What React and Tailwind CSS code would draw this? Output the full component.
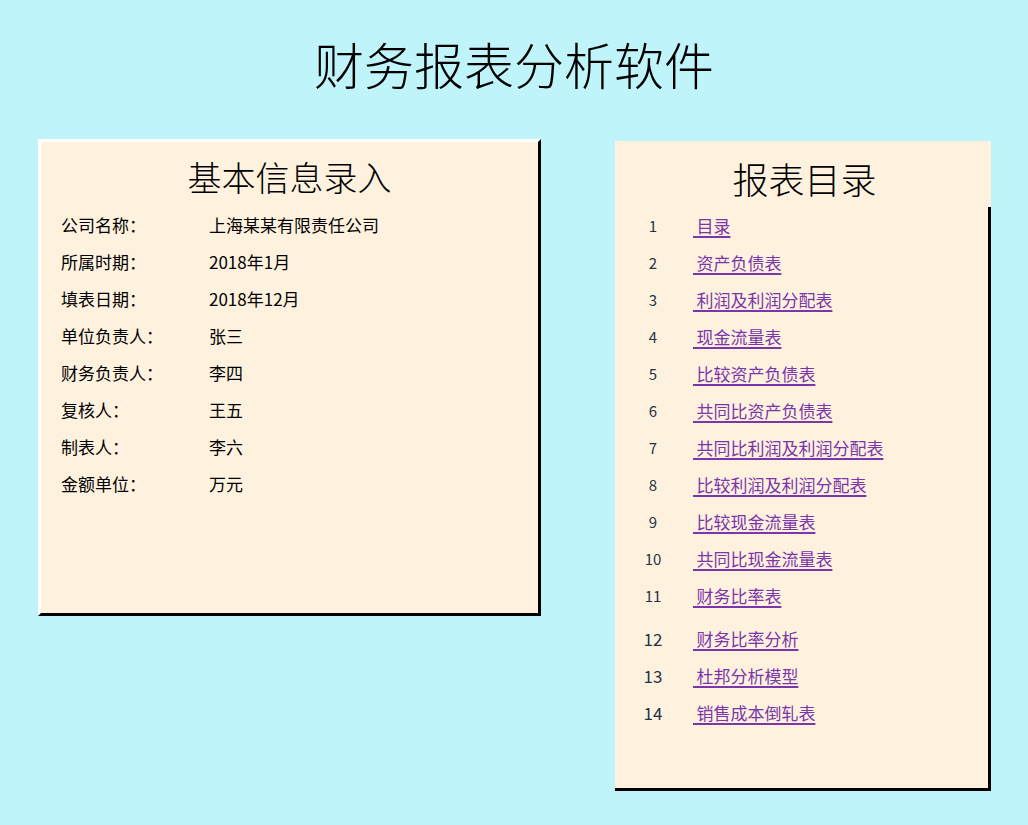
import React from "react";

const info = [
  ["公司名称：", "上海某某有限责任公司"],
  ["所属时期：", "2018年1月"],
  ["填表日期：", "2018年12月"],
  ["单位负责人：", "张三"],
  ["财务负责人：", "李四"],
  ["复核人：", "王五"],
  ["制表人：", "李六"],
  ["金额单位：", "万元"],
];

const catalog = [
  "目录",
  "资产负债表",
  "利润及利润分配表",
  "现金流量表",
  "比较资产负债表",
  "共同比资产负债表",
  "共同比利润及利润分配表",
  "比较利润及利润分配表",
  "比较现金流量表",
  "共同比现金流量表",
  "财务比率表",
  "财务比率分析",
  "杜邦分析模型",
  "销售成本倒轧表",
];

export default function App() {
  const sans = { fontFamily: '"Noto Sans CJK SC", "Noto Sans", sans-serif' };
  return (
    <div
      className="min-h-screen w-full bg-[#bff4fb] text-black"
      style={sans}
    >
      <div className="flex h-[130px] items-center justify-center pb-[4px]">
        <h1 className="text-[50px] font-light leading-none">
          财务报表分析软件
        </h1>
      </div>
      <div className="flex items-start pl-[38px]">
        <div className="mt-[9px] h-[477px] w-[503px] border-[3px] border-t-white border-l-white border-r-black border-b-black bg-[#fef2df]">
          <div className="flex h-[64px] items-center justify-center pt-[6px] text-[34px] font-light leading-none">
            基本信息录入
          </div>
          <div className="pl-[20px]">
            {info.map(([k, v]) => (
              <div key={k} className="flex h-[37px] items-center text-[17px] leading-none">
                <div className="w-[148px]">{k}</div>
                <div>{v}</div>
              </div>
            ))}
          </div>
        </div>
        <div className="ml-[74px] mt-[11px] flex w-[377px] flex-col">
          <div className="flex h-[66px] w-[376px] items-center justify-center bg-[#fef2df] pt-[8px] pl-[3px] text-[36px] font-light leading-none">
            报表目录
          </div>
          <div className="h-[584px] w-[376px] border-r-[3px] border-b-[3px] border-black bg-[#fef2df]">
            {catalog.map((t, i) => (
              <div
                key={t}
                className={
                  "flex h-[37px] items-center " + (i === 11 ? "mt-[6px]" : "")
                }
              >
                <div
                  className={
                    "w-[76px] text-center leading-none text-[#1f3545] " +
                    (i >= 11 ? "text-[17px]" : "text-[15px]")
                  }
                >
                  {i + 1}
                </div>
                <a
                  href="#"
                  className="ml-[2px] text-[17px] leading-none text-[#7a36aa] underline decoration-[2px] underline-offset-[3px]"
                >
                  {"\u2009" + t}
                </a>
              </div>
            ))}
          </div>
        </div>
      </div>
    </div>
  );
}
